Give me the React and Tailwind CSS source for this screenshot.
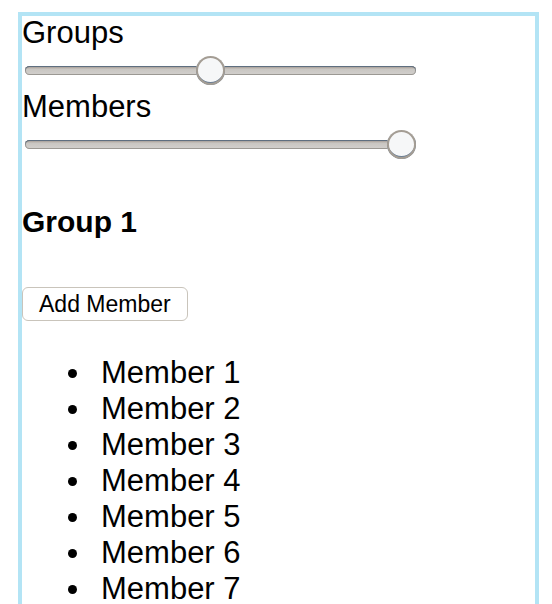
import { useState } from 'react';

const sliderCls =
  'block ml-[3px] w-[391px] h-[28px] appearance-none bg-transparent outline-none cursor-pointer ' +
  '[&::-webkit-slider-runnable-track]:h-[9px] [&::-webkit-slider-runnable-track]:rounded-full ' +
  '[&::-webkit-slider-runnable-track]:bg-[linear-gradient(#9a8f86,#c9c6c2_35%,#d2d0cd)] ' +
  '[&::-webkit-slider-runnable-track]:shadow-[inset_0_1px_0_#5f6f80,inset_0_0_0_1px_#9b9893] ' +
  '[&::-webkit-slider-thumb]:appearance-none [&::-webkit-slider-thumb]:w-[29px] [&::-webkit-slider-thumb]:h-[29px] ' +
  '[&::-webkit-slider-thumb]:mt-[-10px] [&::-webkit-slider-thumb]:rounded-full ' +
  '[&::-webkit-slider-thumb]:bg-[#f6f7f8] ' +
  '[&::-webkit-slider-thumb]:shadow-[inset_0_0_0_2px_#a49d94,inset_0_-2px_0_1px_#6b7f96]';

function Field({ label, value, max, onChange }) {
  return (
    <div>
      <div className="leading-[34px]">{label}</div>
      <input
        type="range" min={1} max={max} value={value}
        onChange={(e) => onChange(Number(e.target.value))}
        className={sliderCls + ' mt-[6px] mb-[6px]'}
      />
    </div>
  );
}

export default function App() {
  const [groups, setGroups] = useState(10);
  const [members, setMembers] = useState(20);

  const list = Array.from({ length: members }, (_, i) => `Member ${i + 1}`);

  return (
    <div className="min-h-screen bg-white text-black text-[31px] [font-family:'Liberation_Sans',Arial,sans-serif]">
      <div className="mt-[12px] ml-[18px] w-[521px] border-4 border-[#b3e4f5] min-h-[700px]">
        <Field label="Groups" value={groups} max={20} onChange={setGroups} />
        <Field label="Members" value={members} max={20} onChange={setMembers} />

        <h3 className="mt-[46px] text-[30px] leading-[36px] font-bold">Group 1</h3>

        <button
          type="button"
          onClick={() => setMembers((m) => Math.min(20, m + 1))}
          className="mt-[47px] block h-[34px] px-[16px] text-[23px] leading-[26px] bg-white border border-[#c9c4bb] rounded-[6px]"
        >
          Add Member
        </button>

        <ul className="mt-[34px] pl-[46px]">
          {list.map((m) => (
            <li key={m} className="flex items-center leading-[36px]">
              <span className="w-[9px] h-[9px] rounded-full bg-black mr-[24px]" />
              {m}
            </li>
          ))}
        </ul>
      </div>
    </div>
  );
}
